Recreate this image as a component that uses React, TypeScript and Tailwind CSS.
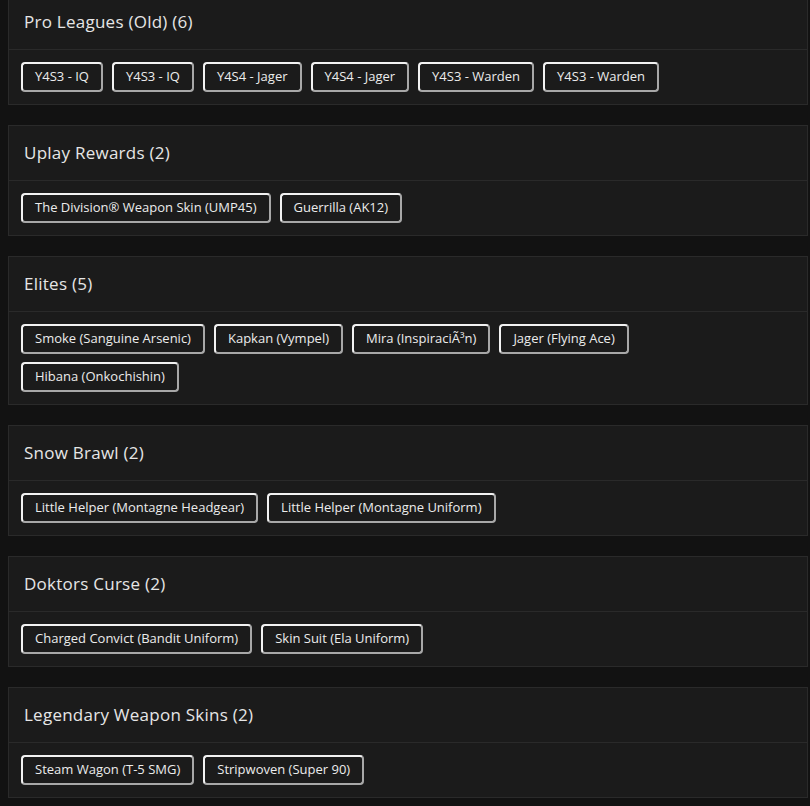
const sections = [
  {
    title: "Pro Leagues (Old)",
    items: ["Y4S3 - IQ", "Y4S3 - IQ", "Y4S4 - Jager", "Y4S4 - Jager", "Y4S3 - Warden", "Y4S3 - Warden"],
  },
  {
    title: "Uplay Rewards",
    items: ["The Division® Weapon Skin (UMP45)", "Guerrilla (AK12)"],
  },
  {
    title: "Elites",
    items: [
      "Smoke (Sanguine Arsenic)",
      "Kapkan (Vympel)",
      "Mira (InspiraciÃ³n)",
      "Jager (Flying Ace)",
      "Hibana (Onkochishin)",
    ],
  },
  {
    title: "Snow Brawl",
    items: ["Little Helper (Montagne Headgear)", "Little Helper (Montagne Uniform)"],
  },
  {
    title: "Doktors Curse",
    items: ["Charged Convict (Bandit Uniform)", "Skin Suit (Ela Uniform)"],
  },
  {
    title: "Legendary Weapon Skins",
    items: ["Steam Wagon (T-5 SMG)", "Stripwoven (Super 90)"],
  },
];

export default function App() {
  return (
    <div className="min-h-screen bg-[#121212] overflow-hidden font-['Open_Sans',sans-serif]">
      <div className="-mt-[6px] ml-2 w-[800px]">
        {sections.map((section) => (
          <div
            key={section.title}
            className="mb-5 border border-[#2a2a2a] bg-[#1b1b1b]"
          >
            {/* Header */}
            <div className="h-[55px] flex items-center px-[15px] border-b border-[#2a2a2a]">
              <h3 className="text-[17px] font-medium text-[#e6e6e6] tracking-[0.25px]">
                {section.title} ({section.items.length})
              </h3>
            </div>

            {/* Items */}
            <div className="p-3 flex flex-wrap gap-x-[9px] gap-y-2">
              {section.items.map((item, index) => (
                <span
                  key={index}
                  className="h-[30px] flex items-center px-3 rounded-[4px] border-2 border-[#f2f2f2] border-r-[#a8a8a8] border-b-[#a8a8a8] text-[13px] text-[#ececec] whitespace-nowrap"
                >
                  {item}
                </span>
              ))}
            </div>
          </div>
        ))}
      </div>
    </div>
  );
}
